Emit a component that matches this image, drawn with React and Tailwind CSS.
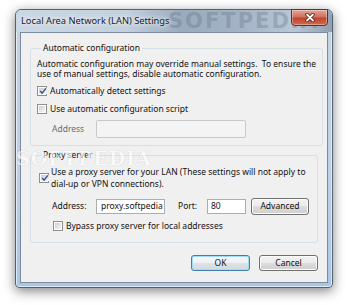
import React from "react";

function Checkbox({ checked }) {
  return (
    <span className="w-[10px] h-[10px] shrink-0 border border-[#8e8f8f] bg-white p-[1px] flex">
      <span className="flex-1 flex items-center justify-center bg-[linear-gradient(135deg,#cbcfd5,#f5f6f7)]">
        {checked && (
          <svg width="8" height="8" viewBox="0 0 8 8" className="block">
            <path d="M1.2 4.1 L3.1 6.2 L6.9 1.4" stroke="#3c528f" strokeWidth="1.5" fill="none" />
          </svg>
        )}
      </span>
    </span>
  );
}

function Button({ children, def, w = "w-[59px]", h = "h-[16px]" }) {
  return (
    <div
      className={
        w +
        " " +
        h +
        " rounded-[3px] border flex items-center justify-center " +
        (def
          ? "border-[#3c7fb1] shadow-[inset_0_0_0_1px_#a6dbf5] bg-[linear-gradient(#f4f7f9_0%,#eef1f3_50%,#dde3e7_50%,#d3d9dd_100%)]"
          : "border-[#707070] shadow-[inset_0_0_0_1px_#fcfcfc] bg-[linear-gradient(#f2f2f2_0%,#ebebeb_50%,#dddddd_50%,#cfcfcf_100%)]")
      }
    >
      <span className="leading-none">{children}</span>
    </div>
  );
}

export default function App() {
  return (
    <div className="w-[350px] h-[305px] bg-white overflow-hidden font-['Noto_Sans',sans-serif] text-[8.5px] text-[#111]">
      <div className="ml-[15px] mt-[9px] w-[318px] h-[279px] rounded-t-[6px] rounded-b-[4px] border border-[#56626f] shadow-[0_3px_12px_rgba(0,0,0,0.5),inset_0_0_0_1px_rgba(255,255,255,0.6)] bg-[linear-gradient(180deg,#c5d3e1_0%,#bcd0e6_60%,#a9c6e6_100%)] flex flex-col">
        {/* Title bar */}
        <div className="h-[22px] relative flex items-start rounded-t-[6px] bg-[linear-gradient(90deg,#cad7e4_0%,#c3d0de_35%,#9aabbe_52%,#a3b3c5_70%,#b9c7d6_88%,#8fa0b2_100%)]">
          <span className="absolute left-[152px] top-[1px] text-[21px] font-bold tracking-[2px] text-[#5c6c80] opacity-30 font-['DejaVu_Sans',sans-serif] leading-none select-none">
            SOFTPEDIA
          </span>
          <span className="relative pl-[5px] pt-[5px] text-[9.3px] leading-[12px] text-[#1a1a1a] [text-shadow:0_0_4px_#fff,0_0_6px_#fff]">
            Local Area Network (LAN) Settings
          </span>
          <div className="relative ml-auto mr-[4px] -mt-[1px] w-[37px] h-[17px] rounded-b-[4px] border border-[#6e2b22] bg-[linear-gradient(180deg,#e7a597_0%,#d0725f_45%,#c1452f_55%,#d06a4f_100%)] shadow-[inset_0_0_0_1px_rgba(255,255,255,0.35)] flex items-center justify-center">
            <svg width="10" height="9" viewBox="0 0 10 9">
              <path d="M2 1.5 L8 7.5 M8 1.5 L2 7.5" stroke="#4a1a14" strokeWidth="3.4" strokeLinecap="round" />
              <path d="M2 1.5 L8 7.5 M8 1.5 L2 7.5" stroke="#ffffff" strokeWidth="1.8" strokeLinecap="round" />
            </svg>
          </div>
        </div>

        {/* Client area */}
        <div className="mx-[4px] mb-[4px] flex-1 border border-[#7d8c9c] bg-[#f0f0f0] flex flex-col px-[9px]">
          {/* Group 1 */}
          <fieldset className="mt-[10px] border border-[#d5dfe5] rounded-[3px] px-[6px] pb-[7px]">
            <legend className="ml-[4px] px-[2px] leading-[10px]">Automatic configuration</legend>
            <div className="mt-[6px] leading-[10px] whitespace-pre">
              <div>Automatic configuration may override manual settings.  To ensure the</div>
              <div>use of manual settings, disable automatic configuration.</div>
            </div>
            <div className="mt-[6px] h-[12px] flex items-center gap-[3px]">
              <Checkbox checked />
              <span>Automatically detect settings</span>
            </div>
            <div className="mt-[6px] h-[12px] flex items-center gap-[3px]">
              <Checkbox />
              <span>Use automatic configuration script</span>
            </div>
            <div className="mt-[5px] flex items-center">
              <span className="ml-[15px] w-[44px] text-[#6d6d6d]">Address</span>
              <div className="w-[150px] h-[18px] border border-[#c9c9c9] rounded-[2px] bg-[#f4f4f4]" />
            </div>
          </fieldset>

          {/* Group 2 */}
          <fieldset className="mt-[4px] border border-[#d5dfe5] rounded-[3px] px-[6px] pb-[10px] relative">
            <legend className="ml-[4px] px-[2px] leading-[10px]">Proxy server</legend>
            <span className="absolute -left-[15px] -top-[11px] text-[19px] font-bold tracking-[1px] text-white opacity-60 [text-shadow:0_0_1px_#aaa] font-['DejaVu_Serif',serif] leading-none select-none pointer-events-none">
              SOFTPEDIA
            </span>
            <div className="mt-[6px] flex items-center gap-[2px]">
              <span className="ml-[2px]">
                <Checkbox checked />
              </span>
              <div className="leading-[12px]">
                <div>Use a proxy server for your LAN (These settings will not apply to</div>
                <div>dial-up or VPN connections).</div>
              </div>
            </div>
            <div className="mt-[8px] flex items-center">
              <span className="ml-[15px] w-[44px]">Address:</span>
              <div className="w-[69px] h-[15px] border border-[#abadb3] bg-white flex items-center pl-[4px] overflow-hidden whitespace-nowrap">
                proxy.softpedia
              </div>
              <span className="ml-[13px] w-[29px]">Port:</span>
              <div className="w-[39px] h-[15px] border border-[#abadb3] bg-white flex items-center pl-[3px]">80</div>
              <div className="ml-[5px]">
                <Button w="w-[58px]" h="h-[17px]">Advanced</Button>
              </div>
            </div>
            <div className="mt-[5px] h-[12px] flex items-center gap-[3px]">
              <span className="ml-[16px]">
                <Checkbox />
              </span>
              <span>Bypass proxy server for local addresses</span>
            </div>
          </fieldset>

          <div className="mt-[12px] flex justify-end gap-[9px]">
            <Button def>OK</Button>
            <Button>Cancel</Button>
          </div>
        </div>
      </div>
    </div>
  );
}
